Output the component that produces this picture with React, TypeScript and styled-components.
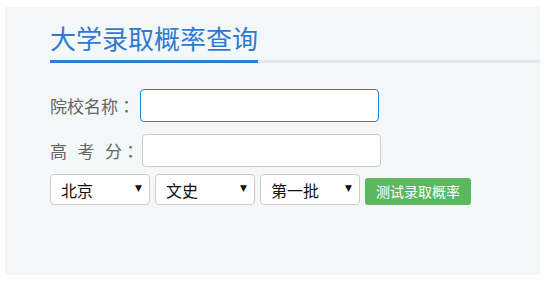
import React from "react"
import styled, { createGlobalStyle } from "styled-components"

const GlobalStyle = createGlobalStyle`
	html, body {
		margin: 0;
		padding: 0;
		background: #ffffff;
		font-family: "Noto Sans CJK SC", "Noto Sans", sans-serif;
	}
`

const Panel = styled.div`
	margin: 7px 8px 0 5px;
	height: 268px;
	background: #f4f7f8;
	box-sizing: border-box;
`

const Header = styled.div`
	margin-left: 45px;
	padding-top: 14px;
	border-bottom: 3px solid #e4e6e8;
`

const Title = styled.h2`
	display: inline-block;
	margin: 0 0 -3px 0;
	padding-bottom: 5px;
	font-size: 26px;
	line-height: 34px;
	font-weight: 400;
	color: #2d7bd0;
	border-bottom: 3px solid #2d7bd0;
`

const Form = styled.div`
	display: flex;
	flex-direction: column;
	padding: 26px 0 0 45px;
`

const Row = styled.div<{ $gap?: number; $align?: string }>`
	display: flex;
	align-items: ${(p) => p.$align || "center"};
	margin-top: ${(p) => p.$gap || 0}px;
`

const Label = styled.label<{ $space?: number }>`
	font-size: 17px;
	line-height: 33px;
	color: #666666;
	margin-right: ${(p) => p.$space || 0}px;
	white-space: nowrap;
`

const Spread = styled.span`
	letter-spacing: 10.5px;
`

// centred full-width colon, as in the reference font
const Colon = styled.span`
	font-family: "Noto Sans CJK TC", sans-serif;
`

const TextInput = styled.input<{ $focused?: boolean }>`
	box-sizing: border-box;
	width: 239px;
	height: 33px;
	padding: 0 8px;
	border: 1px solid ${(p) => (p.$focused ? "#1a8ad6" : "#cccccc")};
	border-radius: 4px;
	background: #ffffff;
	font-size: 15px;
	outline: none;
`

const SelectBox = styled.div<{ $width: number }>`
	position: relative;
	width: ${(p) => p.$width}px;
	height: 31px;
	margin-right: 5px;
`

const Select = styled.select`
	appearance: none;
	-webkit-appearance: none;
	box-sizing: border-box;
	width: 100%;
	height: 100%;
	padding: 0 0 0 10px;
	border: 1px solid #cccccc;
	border-radius: 4px;
	background: #ffffff;
	color: #111111;
	font-family: "Noto Sans CJK SC", sans-serif;
	font-size: 16px;
	outline: none;
`

const Arrow = styled.span`
	position: absolute;
	right: 8px;
	top: 10px;
	font-size: 9px;
	line-height: 9px;
	color: #111111;
	pointer-events: none;
	font-family: "DejaVu Sans", sans-serif;
`

const Button = styled.button`
	box-sizing: border-box;
	width: 106px;
	height: 27px;
	padding: 0;
	border: none;
	border-radius: 3px;
	background: #5cb85c;
	color: #ffffff;
	font-family: "Noto Sans CJK SC", sans-serif;
	font-size: 14px;
	line-height: 27px;
	cursor: pointer;
`

const Dropdown = ({ width, options }: { width: number; options: string[] }) => (
	<SelectBox $width={width}>
		<Select defaultValue={options[0]}>
			{options.map((o) => (
				<option key={o} value={o}>
					{o}
				</option>
			))}
		</Select>
		<Arrow>▼</Arrow>
	</SelectBox>
)

export default function App() {
	return (
		<>
			<GlobalStyle />
			<Panel>
				<Header>
					<Title>大学录取概率查询</Title>
				</Header>
				<Form>
					<Row>
						<Label $space={5}>
							院校名称<Colon>：</Colon>
						</Label>
						<TextInput $focused />
					</Row>
					<Row $gap={12}>
						<Label $space={3}>
							<Spread>高考</Spread>分<Colon>：</Colon>
						</Label>
						<TextInput />
					</Row>
					<Row $gap={7} $align="flex-end">
						<Dropdown width={100} options={["北京", "上海", "天津"]} />
						<Dropdown width={100} options={["文史", "理工"]} />
						<Dropdown width={100} options={["第一批", "第二批", "第三批"]} />
						<Button>测试录取概率</Button>
					</Row>
				</Form>
			</Panel>
		</>
	)
}
